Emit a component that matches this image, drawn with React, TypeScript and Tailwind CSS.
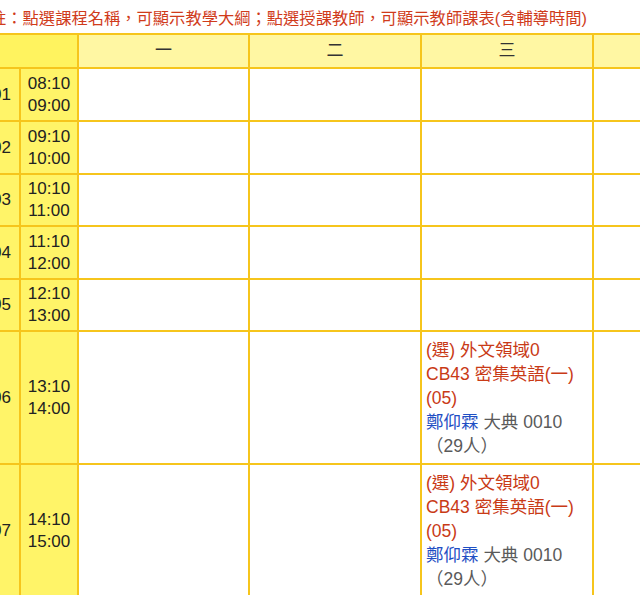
import React from "react";

type Course = {
  kind: string;
  code: string;
  name: string;
  cls: string;
  teacher: string;
  room: string;
  count: string;
};

type Period = {
  no: string;
  start: string;
  end: string;
  cells: (Course | null)[];
};

const english: Course = {
  kind: "(選) 外文領域0",
  code: "CB43",
  name: "密集英語(一)",
  cls: "(05)",
  teacher: "鄭仰霖",
  room: "大典 0010",
  count: "（29人）",
};

const days = ["一", "二", "三", "四", "五"];

const periods: Period[] = [
  { no: "01", start: "08:10", end: "09:00", cells: [null, null, null, null, null] },
  { no: "02", start: "09:10", end: "10:00", cells: [null, null, null, null, null] },
  { no: "03", start: "10:10", end: "11:00", cells: [null, null, null, null, null] },
  { no: "04", start: "11:10", end: "12:00", cells: [null, null, null, null, null] },
  { no: "05", start: "12:10", end: "13:00", cells: [null, null, null, null, null] },
  { no: "06", start: "13:10", end: "14:00", cells: [null, null, english, null, null] },
  { no: "07", start: "14:10", end: "15:00", cells: [null, null, english, null, null] },
];

function CourseCell({ course }: { course: Course | null }) {
  if (!course) return <div className="bg-white" />;
  return (
    <div className="flex flex-col justify-center bg-white pl-[4px] text-[17.5px] leading-[24px]">
      <span className="text-[#c93a16]">{course.kind}</span>
      <span className="text-[#c93a16]">
        {course.code} {course.name}
      </span>
      <span className="text-[#c93a16]">{course.cls}</span>
      <span>
        <span className="text-[#1f4fc4]">{course.teacher}</span>{" "}
        <span className="text-[#5a5a5a]">{course.room}</span>
      </span>
      <span className="text-[#5a5a5a]">{course.count}</span>
    </div>
  );
}

export default function App() {
  return (
    <div
      className="h-[595px] w-[640px] overflow-hidden bg-white text-[17px] text-[#222222]"
      style={{ fontFamily: '"Liberation Sans", "Noto Sans CJK TC", sans-serif' }}
    >
      <div className="ml-[-10px] flex h-[33px] items-center whitespace-nowrap pt-[3px] text-[16.3px] text-[#d03b1b]">
        註：點選課程名稱，可顯示教學大綱；點選授課教師，可顯示教師課表(含輔導時間)
      </div>

      <div className="ml-[-18px] grid w-max grid-cols-[35px_56px_169px_170px_170px_170px_170px] grid-rows-[32px_51px_51px_50px_51px_50px_131px_131px] gap-[2px] bg-[#f6c51c] p-[2px]">
        <div className="col-span-2 bg-[#fff35f]" />
        {days.map((d) => (
          <div key={d} className="flex items-center justify-center bg-[#fff7a3] text-[#333333]">
            {d}
          </div>
        ))}

        {periods.map((p) => (
          <React.Fragment key={p.no}>
            <div className="flex items-center justify-center bg-[#fff468]">{p.no}</div>
            <div className="flex flex-col items-center justify-center bg-[#fff468] leading-[22px]">
              <span>{p.start}</span>
              <span>{p.end}</span>
            </div>
            {p.cells.map((c, i) => (
              <CourseCell key={i} course={c} />
            ))}
          </React.Fragment>
        ))}
      </div>
    </div>
  );
}
